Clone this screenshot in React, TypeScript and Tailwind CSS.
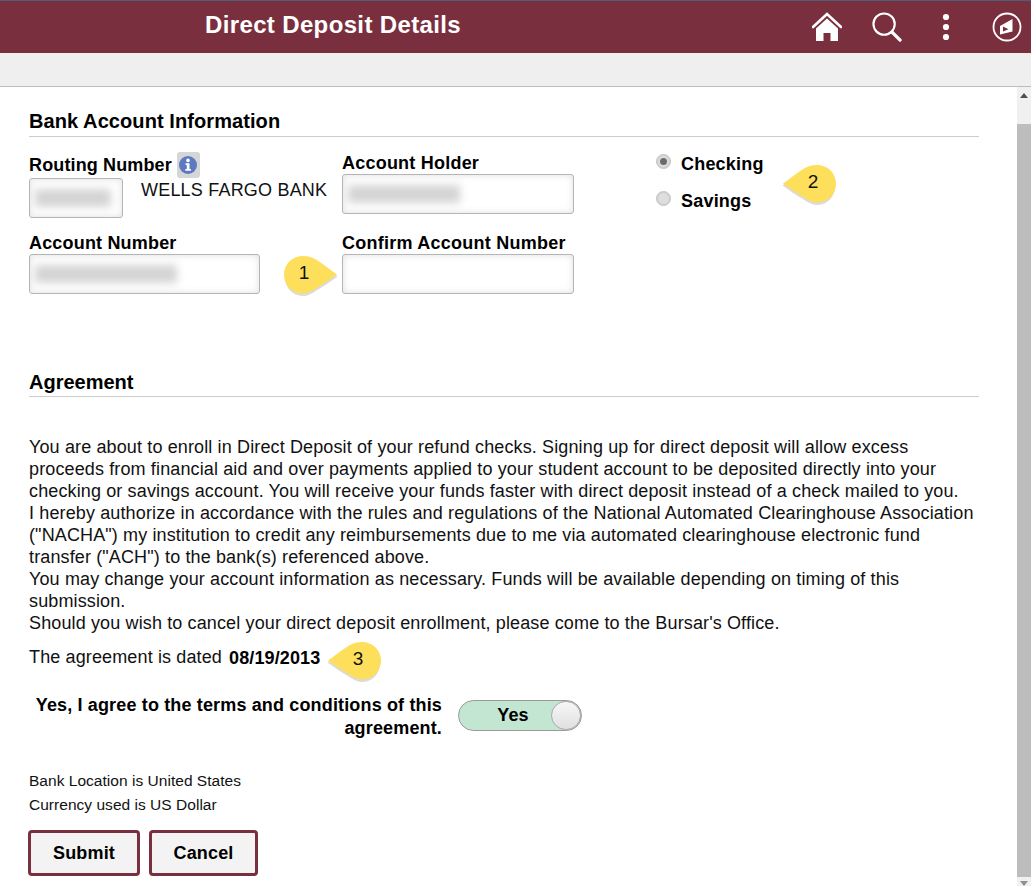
const font = "font-['Liberation_Sans',Arial,sans-serif]";

function Callout({ className, n, flip }: { className: string; n: string; flip?: boolean }) {
  return (
    <div className={`absolute w-[56px] h-[42px] ${className}`}>
      <svg width="56" height="42" viewBox="0 0 56 42" className="absolute left-0 top-0">
        <g transform={flip ? "translate(56 0) scale(-1 1)" : undefined}>
          <path d="M20 1.5 C25 1.5 29 2.5 33 5 C40 9.5 47 15 54 20 C47 25 40 30 33 34 C28 37.5 24 39.5 19 39.5 C9 39.5 1.5 31 1.5 20.5 C1.5 10 9.5 1.5 20 1.5 Z" fill="#bdbdbd" opacity="0.55" transform="translate(0.5 1.5)" />
          <path d="M20 1 C25 1 29 2 33 4.5 C40 9 47 14.5 54 19.5 C47 24.5 40 29.5 33 33.5 C28 37 24 38.5 19 38.5 C9 38.5 1 30 1 19.5 C1 9 9.5 1 20 1 Z" fill="#fedf5b" />
        </g>
      </svg>
      <span className={`absolute top-[5px] w-[40px] text-center text-[19px] leading-[26px] text-[#111] ${flip ? "left-[12px]" : "left-[1px]"}`}>{n}</span>
    </div>
  );
}

function Field({ className, blurClass }: { className: string; blurClass?: string }) {
  return (
    <div className={`h-[40px] bg-white border border-[#b5b5b5] rounded-[3px] shadow-[inset_0_0_7px_rgba(0,0,0,0.13)] overflow-hidden flex items-center px-[5px] ${className}`}>
      {blurClass ? <div className={`h-[18px] bg-[#d4d4d4] blur-[4px] ${blurClass}`} /> : null}
    </div>
  );
}

function Radio({ checked }: { checked?: boolean }) {
  return (
    <span className="mt-[1px] w-[15px] h-[15px] rounded-full bg-[#dedede] border border-[#c4c4c4] shadow-[inset_0_0_2px_rgba(0,0,0,0.2)] flex items-center justify-center">
      {checked ? <span className="w-[7px] h-[7px] rounded-full bg-[#6c6c6c]" /> : null}
    </span>
  );
}

export default function App() {
  return (
    <div className={`relative w-[1031px] h-[886px] overflow-hidden bg-white flex flex-col text-black ${font}`}>
      <header className="h-[53px] shrink-0 bg-[#7a2f3f] border-t border-[#4d5f78] flex items-center text-white">
        <h1 className="ml-[205px] mb-[4px] text-[24px] font-bold leading-[48px] w-[607px] tracking-[0.36px]">Direct Deposit Details</h1>
        <svg width="30" height="30" viewBox="0 0 30 30" className="mb-[1px]">
          <path d="M1 15 L15 2 L29 15" fill="none" stroke="#fff" strokeWidth="2.6" strokeLinecap="round" strokeLinejoin="miter" />
          <path d="M15 6.5 L26 16.5 V29 H18.5 V21 H11.5 V29 H4 V16.5 Z" fill="#fff" />
        </svg>
        <svg width="30" height="30" viewBox="0 0 31 31" className="ml-[30px]">
          <circle cx="12.5" cy="12.5" r="11" fill="none" stroke="#fff" strokeWidth="2.2" />
          <path d="M21 21 L29 29" stroke="#fff" strokeWidth="3.4" strokeLinecap="round" />
        </svg>
        <svg width="8" height="28" viewBox="0 0 8 28" className="ml-[40px]">
          <circle cx="4" cy="4" r="3.1" fill="#fff" />
          <circle cx="4" cy="14" r="3.1" fill="#fff" />
          <circle cx="4" cy="24" r="3.1" fill="#fff" />
        </svg>
        <svg width="30" height="30" viewBox="0 0 30 30" className="ml-[42px]">
          <circle cx="15" cy="15" r="13.5" fill="none" stroke="#fff" strokeWidth="1.8" />
          <path d="M20.5 7 L8 14 V22.5 L20.5 19.5 Z" fill="#fff" />
          <path d="M11 14.5 V19.5 L16.5 17.2 Z" fill="#7a2f3f" />
        </svg>
      </header>
      <div className="h-[34px] shrink-0 bg-[#efefef] border-b border-[#bcbcbc]" />

      <div className="flex flex-1 min-h-0">
        <main className="flex-1 pl-[29px] pr-[38px] pt-[21px] tracking-[0.13px]">
          <section>
            <h2 className="text-[20px] font-bold leading-[26px] pb-[2px] border-b border-[#cccccc] tracking-[0.08px]">Bank Account Information</h2>
            <div className="flex mt-[15px] h-[80px]">
              <div className="w-[313px] pt-[1px]">
                <div className="flex items-center h-[24px]">
                  <span className="text-[18px] font-bold">Routing Number</span>
                  <span className="ml-[5px] w-[23px] h-[26px] rounded-[3px] bg-[#d6d6d6] flex items-center justify-center">
                    <svg width="20" height="20" viewBox="0 0 20 20">
                      <circle cx="10" cy="10" r="9" fill="#5f78c4" />
                      <circle cx="10" cy="5.4" r="1.8" fill="#fff" />
                      <path d="M7.5 8.2 H11.5 V14 H13 V15.8 H7.3 V14 H8.8 V10 H7.5 Z" fill="#fff" />
                    </svg>
                  </span>
                </div>
                <div className="flex mt-[1px]">
                  <Field className="w-[94px]" blurClass="w-[76px]" />
                  <span className="ml-[18px] mt-[1px] text-[18px] leading-[22px] text-[#111] tracking-[0.2px]">WELLS FARGO BANK</span>
                </div>
              </div>
              <div className="w-[314px]">
                <div className="text-[18px] font-bold leading-[22px] tracking-[0.22px]">Account Holder</div>
                <Field className="w-[232px]" blurClass="w-[112px]" />
              </div>
              <div className="flex flex-col gap-[15px] pt-[1px] text-[18px] font-bold leading-[22px] tracking-[0.2px]">
                <label className="flex items-start gap-[10px]"><Radio checked />Checking</label>
                <label className="flex items-start gap-[10px]"><Radio />Savings</label>
              </div>
            </div>
            <div className="flex">
              <div className="w-[313px]">
                <div className="text-[18px] font-bold leading-[22px] tracking-[0.18px]">Account Number</div>
                <Field className="w-[231px]" blurClass="w-[142px]" />
              </div>
              <div className="w-[314px]">
                <div className="text-[18px] font-bold leading-[22px] tracking-[0.25px]">Confirm Account Number</div>
                <Field className="w-[232px]" />
              </div>
            </div>
          </section>

          <section className="mt-[75px]">
            <h2 className="text-[20px] font-bold leading-[26px] pb-[1px] border-b border-[#cccccc] tracking-normal">Agreement</h2>
            <div className="mt-[39px] text-[18px] leading-[22px] text-[#111]">
              <p>You are about to enroll in Direct Deposit of your refund checks. Signing up for direct deposit will allow excess proceeds from financial aid and over payments applied to your student account to be deposited directly into your checking or savings account. You will receive your funds faster with direct deposit instead of a check mailed to you.</p>
              <p>I hereby authorize in accordance with the rules and regulations of the National Automated Clearinghouse Association ("NACHA") my institution to credit any reimbursements due to me via automated clearinghouse electronic fund transfer ("ACH") to the bank(s) referenced above.</p>
              <p>You may change your account information as necessary. Funds will be available depending on timing of this submission.</p>
              <p>Should you wish to cancel your direct deposit enrollment, please come to the Bursar's Office.</p>
            </div>
            <div className="mt-[10px] flex items-center text-[18px] leading-[24px] text-[#111]">
              <span>The agreement is dated</span>
              <span className="ml-[7px] font-bold mt-[2px] text-black">08/19/2013</span>
            </div>
            <div className="mt-[24px] flex items-start">
              <div className="w-[413px] text-right text-[18px] font-bold leading-[23px] tracking-[0.15px]">Yes, I agree to the terms and conditions of this agreement.</div>
              <div className="ml-[16px] mt-[6px] w-[124px] h-[31px] rounded-full bg-[#c3e6d3] border border-[#9a9a9a] flex items-center">
                <span className="flex-1 text-center text-[18px] font-bold pl-[16px]">Yes</span>
                <span className="w-[30px] h-[29px] rounded-full bg-gradient-to-b from-[#f7f7f7] to-[#e0e0e0] border border-[#a8a8a8]" />
              </div>
            </div>
            <div className="mt-[29px] text-[15.5px] leading-[24px] text-[#111] tracking-[0.03px]">
              <div>Bank Location is United States</div>
              <div>Currency used is US Dollar</div>
            </div>
            <div className="mt-[13px] -ml-[1px] flex gap-[9px]">
              <button className="w-[112px] h-[46px] rounded-[4px] border-[3px] border-[#7a2f3f] bg-[#f3f3f3] text-[18px] font-bold">Submit</button>
              <button className="w-[109px] h-[46px] rounded-[4px] border-[3px] border-[#7a2f3f] bg-[#f3f3f3] text-[18px] font-bold">Cancel</button>
            </div>
          </section>
        </main>

        <div className="w-[14px] shrink-0 bg-[#f0f0f0] flex flex-col items-center">
          <div className="h-[37px] pt-[6px] shrink-0">
            <svg width="8" height="5" viewBox="0 0 8 5"><path d="M4 0 L8 5 H0 Z" fill="#505050" /></svg>
          </div>
          <div className="flex-1 w-full bg-[#bdbdbd]" />
          <div className="h-[9px] shrink-0 flex items-end">
            <svg width="8" height="5" viewBox="0 0 8 5"><path d="M0 0 H8 L4 5 Z" fill="#8f8f8f" /></svg>
          </div>
        </div>
      </div>

      <Callout className="left-[283px] top-[255px]" n="1" />
      <Callout className="left-[781px] top-[164px]" n="2" flip />
      <Callout className="left-[326px] top-[641px]" n="3" flip />
    </div>
  );
}
